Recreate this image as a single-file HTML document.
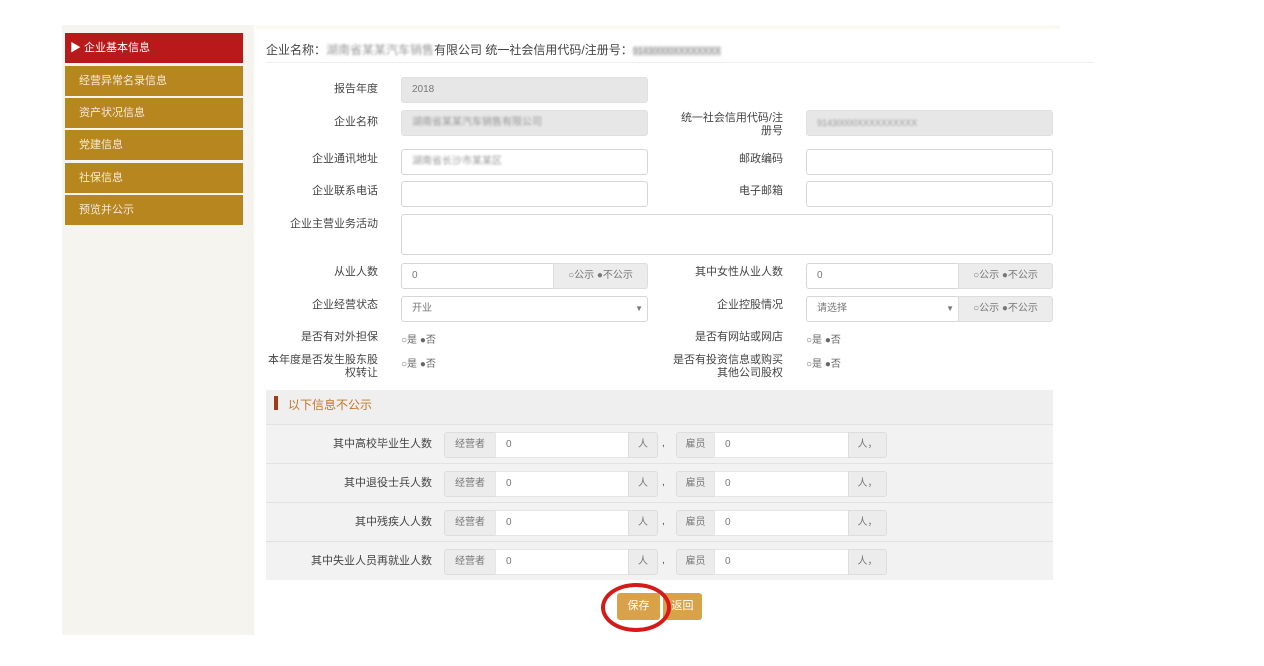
<!DOCTYPE html>
<html><head><meta charset="utf-8">
<style>
*{box-sizing:border-box;margin:0;padding:0}
body{width:1264px;height:666px;background:#fff;position:relative;overflow:hidden;font-family:"Liberation Sans","Noto Sans CJK SC",sans-serif;font-size:11px;color:#444}
.a{position:absolute}
.side{left:62px;top:25px;width:192px;height:610px;background:#f6f4ee}
.mi{position:absolute;left:65px;width:178px;height:30px;background:#b8861f;color:#f4ead6;font-size:11px;line-height:30px;padding-left:14px}
.lbl{position:absolute;text-align:right;font-size:11px;color:#444;line-height:13px}
.in{position:absolute;height:26px;border:1px solid #d6d6d6;border-radius:3px;background:#fff;font-size:10px;color:#777;line-height:24px;padding-left:10px}
.g{background:#e7e7e7;border-color:#e0e0e0}
.ad{position:absolute;height:26px;background:#ececec;border:1px solid #ddd;font-size:10px;color:#777;line-height:24px;text-align:center}
.blur{color:#999;filter:blur(1px)}
.tr{position:absolute;left:266px;width:787px;height:39px;background:#f2f2f2;border-top:1px solid #e2e2e2}
</style></head><body>
<div class="a side"></div>
<div class="a" style="left:256px;top:25px;width:804px;height:4px;background:#fbf7f1"></div>
<div class="mi" style="top:33px;background:#b81a1c;color:#fff;padding-left:5px">▶ 企业基本信息</div>
<div class="mi" style="top:66px">经营异常名录信息</div>
<div class="mi" style="top:98px">资产状况信息</div>
<div class="mi" style="top:130px">党建信息</div>
<div class="mi" style="top:163px">社保信息</div>
<div class="mi" style="top:195px">预览并公示</div>

<div class="a" style="left:266px;top:41px;font-size:12px;color:#444">企业名称：<span class="blur">湖南省某某汽车销售</span>有限公司 统一社会信用代码/注册号：<span class="blur" style="font-size:9px;background:#ddd">91430000XXXXXXXX</span></div>
<div class="a" style="left:266px;top:62px;width:828px;height:1px;background:#eee"></div>

<div class="lbl" style="left:270px;width:108px;top:83px">报告年度</div>
<div class="in g" style="left:401px;top:77px;width:247px">2018</div>
<div class="lbl" style="left:270px;width:108px;top:116px">企业名称</div>
<div class="in g" style="left:401px;top:110px;width:247px"><span class="blur">湖南省某某汽车销售有限公司</span></div>
<div class="lbl" style="left:670px;width:113px;top:112px">统一社会信用代码/注册号</div>
<div class="in g" style="left:806px;top:110px;width:247px"><span class="blur" style="font-size:9px">91430000XXXXXXXXXX</span></div>
<div class="lbl" style="left:270px;width:108px;top:153px">企业通讯地址</div>
<div class="in" style="left:401px;top:149px;width:247px"><span class="blur">湖南省长沙市某某区</span></div>
<div class="lbl" style="left:670px;width:113px;top:153px">邮政编码</div>
<div class="in" style="left:806px;top:149px;width:247px"></div>
<div class="lbl" style="left:270px;width:108px;top:185px">企业联系电话</div>
<div class="in" style="left:401px;top:181px;width:247px"></div>
<div class="lbl" style="left:670px;width:113px;top:185px">电子邮箱</div>
<div class="in" style="left:806px;top:181px;width:247px"></div>
<div class="lbl" style="left:270px;width:108px;top:218px">企业主营业务活动</div>
<div class="in" style="left:401px;top:214px;width:652px;height:41px"></div>

<div class="lbl" style="left:270px;width:108px;top:266px">从业人数</div>
<div class="in" style="left:401px;top:263px;width:153px;border-radius:3px 0 0 3px">0</div>
<div class="ad" style="left:553px;top:263px;width:95px;border-radius:0 3px 3px 0">○公示 ●不公示</div>
<div class="lbl" style="left:660px;width:123px;top:266px">其中女性从业人数</div>
<div class="in" style="left:806px;top:263px;width:153px;border-radius:3px 0 0 3px">0</div>
<div class="ad" style="left:958px;top:263px;width:95px;border-radius:0 3px 3px 0">○公示 ●不公示</div>

<div class="lbl" style="left:270px;width:108px;top:299px">企业经营状态</div>
<div class="in" style="left:401px;top:296px;width:247px">开业<span style="position:absolute;right:4px;font-size:8px">▼</span></div>
<div class="lbl" style="left:660px;width:123px;top:299px">企业控股情况</div>
<div class="in" style="left:806px;top:296px;width:153px">请选择<span style="position:absolute;right:4px;font-size:8px">▼</span></div>
<div class="ad" style="left:958px;top:296px;width:95px;border-radius:0 3px 3px 0">○公示 ●不公示</div>

<div class="lbl" style="left:270px;width:108px;top:331px">是否有对外担保</div>
<div class="a" style="left:401px;top:331px;font-size:10px;color:#666">○是 ●否</div>
<div class="lbl" style="left:660px;width:123px;top:331px">是否有网站或网店</div>
<div class="a" style="left:806px;top:331px;font-size:10px;color:#666">○是 ●否</div>
<div class="lbl" style="left:266px;width:112px;top:354px">本年度是否发生股东股权转让</div>
<div class="a" style="left:401px;top:355px;font-size:10px;color:#666">○是 ●否</div>
<div class="lbl" style="left:670px;width:113px;top:354px">是否有投资信息或购买其他公司股权</div>
<div class="a" style="left:806px;top:355px;font-size:10px;color:#666">○是 ●否</div>

<div class="a" style="left:266px;top:390px;width:787px;height:34px;background:#f0efef"></div>
<div class="a" style="left:274px;top:396px;width:4px;height:14px;background:#a33a17"></div>
<div class="a" style="left:288px;top:396px;font-size:12px;color:#c0772a">以下信息不公示</div>

<div class="tr" style="top:424px"></div>
<div class="tr" style="top:463px"></div>
<div class="tr" style="top:502px"></div>
<div class="tr" style="top:541px"></div>

<div id="rows"></div>
<script>
var L=["其中高校毕业生人数","其中退役士兵人数","其中残疾人人数","其中失业人员再就业人数"];
var h="";
for(var i=0;i<4;i++){var t=432+i*39;
h+='<div class="lbl" style="left:266px;width:166px;top:'+(t+6)+'px">'+L[i]+'</div>'+
'<div class="ad" style="left:444px;top:'+t+'px;width:52px;border-radius:3px 0 0 3px">经营者</div>'+
'<div class="in" style="left:495px;top:'+t+'px;width:134px;border-radius:0;border-color:#e6e6e6">0</div>'+
'<div class="ad" style="left:628px;top:'+t+'px;width:30px;border-radius:0 3px 3px 0">人</div>'+
'<div class="a" style="left:662px;top:'+(t+6)+'px;font-size:10px">,</div>'+
'<div class="ad" style="left:676px;top:'+t+'px;width:39px;border-radius:3px 0 0 3px">雇员</div>'+
'<div class="in" style="left:714px;top:'+t+'px;width:135px;border-radius:0;border-color:#e6e6e6">0</div>'+
'<div class="ad" style="left:848px;top:'+t+'px;width:39px;border-radius:0 3px 3px 0">人，</div>';}
document.getElementById("rows").innerHTML=h;
</script>

<div class="a" style="left:617px;top:593px;width:43px;height:27px;background:#d9a24a;border-radius:3px;color:#fff;font-size:11px;text-align:center;line-height:27px">保存</div>
<div class="a" style="left:663px;top:593px;width:39px;height:27px;background:#d9a24a;border-radius:3px;color:#fff;font-size:11px;text-align:center;line-height:27px">返回</div>
<div class="a" style="left:601px;top:583px;width:70px;height:49px;border:4px solid #d61a1a;border-radius:50%"></div>
</body></html>
